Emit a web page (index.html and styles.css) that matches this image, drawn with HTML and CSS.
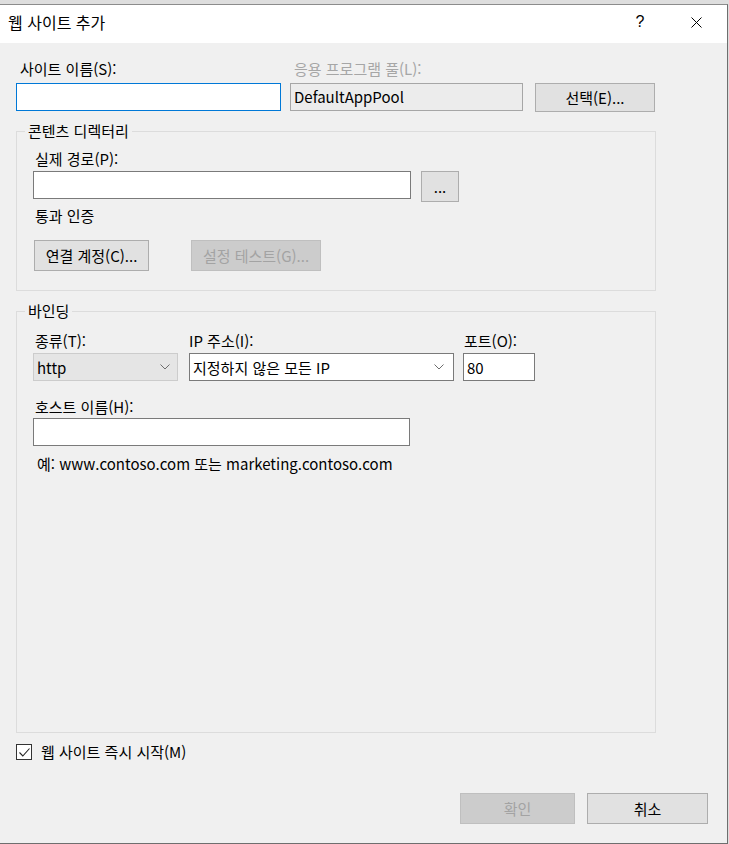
FILE: index.html
```html
<!DOCTYPE html>
<html lang="ko">
  <head>
    <meta charset="utf-8">
    <title>웹 사이트 추가</title>
    <link rel="stylesheet" href="styles.css">
  </head>

  <body>
    <div class="dialog">
      <div class="titlebar">
        <span class="title">웹 사이트 추가</span>
        <span class="help">?</span>
        <svg class="close" width="11" height="11" viewBox="0 0 11 11">
          <path d="M0.5 0.5 L10.5 10.5 M10.5 0.5 L0.5 10.5" stroke="#000" stroke-width="1" fill="none" />
        </svg>
      </div>

      <div class="content">
        <div class="site-row">
          <div class="field site-name">
            <label for="siteName">사이트 이름(S):</label>
            <input type="text" id="siteName" class="text focused" />
          </div>
          <div class="field app-pool">
            <label class="disabled">응용 프로그램 풀(L):</label>
            <div class="readonly">DefaultAppPool</div>
          </div>
          <button class="btn select-btn">선택(E)...</button>
        </div>

        <fieldset class="group content-dir">
          <legend>콘텐츠 디렉터리</legend>
          <div class="group-body">
            <label for="physPath" class="path-label">실제 경로(P):</label>
            <div class="path-row">
              <input type="text" id="physPath" class="text path-input" />
              <button class="btn browse-btn">...</button>
            </div>
            <div class="auth-label">통과 인증</div>
            <div class="auth-row">
              <button class="btn connect-btn">연결 계정(C)...</button>
              <button class="btn test-btn" disabled>설정 테스트(G)...</button>
            </div>
          </div>
        </fieldset>

        <fieldset class="group binding">
          <legend>바인딩</legend>
          <div class="group-body">
            <div class="binding-row">
              <div class="field type-field">
                <label>종류(T):</label>
                <div class="combo combo-type">
                  <span>http</span>
                  <svg width="10" height="6" viewBox="0 0 10 6">
                    <polyline points="0.5,0.5 5,5 9.5,0.5" stroke="#6d6d6d" stroke-width="1" fill="none" />
                  </svg>
                </div>
              </div>
              <div class="field ip-field">
                <label>IP 주소(I):</label>
                <div class="combo combo-ip">
                  <span>지정하지 않은 모든 IP</span>
                  <svg width="10" height="6" viewBox="0 0 10 6">
                    <polyline points="0.5,0.5 5,5 9.5,0.5" stroke="#6d6d6d" stroke-width="1" fill="none" />
                  </svg>
                </div>
              </div>
              <div class="field port-field">
                <label for="port">포트(O):</label>
                <input type="text" id="port" class="text" value="80" />
              </div>
            </div>
            <label for="hostName" class="host-label">호스트 이름(H):</label>
            <input type="text" id="hostName" class="text host-input" />
            <div class="example">예: www.contoso.com 또는 marketing.contoso.com</div>
          </div>
        </fieldset>

        <div class="start-row">
          <span class="checkbox">
            <svg width="11" height="9" viewBox="0 0 11 9">
              <polyline points="0.5,4.5 3.8,8 10.5,0.5" stroke="#222" stroke-width="1.1" fill="none" />
            </svg>
          </span>
          <span>웹 사이트 즉시 시작(M)</span>
        </div>

        <div class="footer">
          <button class="btn ok-btn" disabled>확인</button>
          <button class="btn cancel-btn">취소</button>
        </div>
      </div>
    </div>
  </body>
</html>
```

FILE: styles.css
```css
* {
  box-sizing: border-box;
}

html,
body {
  margin: 0;
}

body {
  background-color: #dedede;
  font-family: "Noto Sans CJK KR", "Noto Sans", sans-serif;
  font-size: 15px;
  color: #000;
}

.dialog {
  width: 728px;
  height: 840px;
  margin-top: 4px;
  border-top: 1px solid #8c8c8c;
  border-right: 1px solid #6e6e6e;
  border-bottom: 1px solid #6e6e6e;
  display: flex;
  flex-direction: column;
}

.titlebar {
  height: 38px;
  background-color: #fff;
  display: flex;
  align-items: flex-start;
  padding: 7px 0 0 8px;
  line-height: 20px;
}

.title {
  font-size: 16px;
}

.help {
  margin-left: auto;
  width: 20px;
  text-align: center;
  font-family: "Liberation Sans", sans-serif;
  font-size: 16px;
}

.close {
  margin: 5px 25px 0 41px;
}

.content {
  flex: 1;
  background-color: #f0f0f0;
  padding: 16px 19px 0 16px;
  display: flex;
  flex-direction: column;
}

label,
.auth-label,
.example {
  display: block;
  line-height: 20px;
}

.disabled {
  color: #a6a6a6;
}

.text {
  height: 28px;
  border: 1px solid #7a7a7a;
  background-color: #fff;
  padding: 0 3px;
  font: inherit;
  outline: none;
}

.text.focused {
  border-color: #0078d7;
}

.btn {
  height: 31px;
  border: 1px solid #adadad;
  background-color: #e1e1e1;
  font: inherit;
  color: #000;
  padding: 0;
}

.btn:disabled {
  background-color: #cccccc;
  border-color: #bfbfbf;
  color: #a3a3a3;
}

/* top row */
.site-row {
  display: flex;
  align-items: flex-end;
}

.site-row .field label {
  padding-left: 4px;
  margin-bottom: 4px;
}

.site-name {
  width: 265px;
}

.site-name .text {
  width: 100%;
}

.app-pool {
  width: 233px;
  margin-left: 9px;
}

.readonly {
  height: 28px;
  border: 1px solid #a6a6a6;
  background-color: #ececec;
  padding: 0 3px;
  line-height: 26px;
}

.select-btn {
  width: 120px;
  height: 29px;
  margin-left: 12px;
  margin-bottom: -1px;
}

/* group boxes */
.group {
  margin: 10px 0 0 0;
  padding: 0;
  border: 1px solid #dcdcdc;
  width: 640px;
  min-width: 0;
}

.group legend {
  margin-left: 8px;
  padding: 0 3px;
  line-height: 20px;
}

.content-dir .group-body {
  padding: 8px 0 19px 16px;
}

.path-label {
  padding-left: 2px;
  margin-bottom: 2px;
}

.path-row {
  display: flex;
  align-items: flex-start;
}

.path-input {
  width: 378px;
}

.browse-btn {
  width: 38px;
  margin-left: 10px;
}

.auth-label {
  margin-top: 4px;
  padding-left: 2px;
}

.auth-row {
  display: flex;
  margin-top: 14px;
}

.connect-btn {
  width: 115px;
  margin-left: 1px;
}

.test-btn {
  width: 130px;
  margin-left: 42px;
}

.binding {
  height: 432px;
}

.binding .group-body {
  padding: 10px 0 0 16px;
}

.binding-row {
  display: flex;
}

.binding-row label {
  margin-bottom: 2px;
}

.type-field {
  width: 145px;
}

.type-field label {
  padding-left: 2px;
}

.ip-field {
  width: 265px;
  margin-left: 11px;
}

.port-field {
  width: 72px;
  margin-left: 9px;
}

.port-field label {
  padding-left: 1px;
}

.port-field .text {
  width: 100%;
}

.combo {
  height: 28px;
  display: flex;
  align-items: center;
  justify-content: space-between;
  padding: 0 7px 0 3px;
}

.combo-type {
  background-color: #e5e5e5;
  border: 1px solid #cccccc;
}

.combo-ip {
  background-color: #fff;
  border: 1px solid #7a7a7a;
  padding-right: 9px;
}

.host-label {
  margin-top: 16px;
  margin-bottom: 1px;
  padding-left: 2px;
}

.host-input {
  width: 377px;
}

.example {
  margin-top: 8px;
  padding-left: 4px;
}

/* bottom */
.start-row {
  display: flex;
  align-items: center;
  margin-top: 9px;
  line-height: 20px;
}

.checkbox {
  width: 16px;
  height: 16px;
  border: 1px solid #333;
  background-color: #fff;
  display: flex;
  align-items: center;
  justify-content: center;
  margin-right: 9px;
}

.footer {
  display: flex;
  justify-content: flex-end;
  margin-top: 31px;
}

.ok-btn {
  width: 115px;
}

.cancel-btn {
  width: 121px;
  margin-left: 12px;
}
```
